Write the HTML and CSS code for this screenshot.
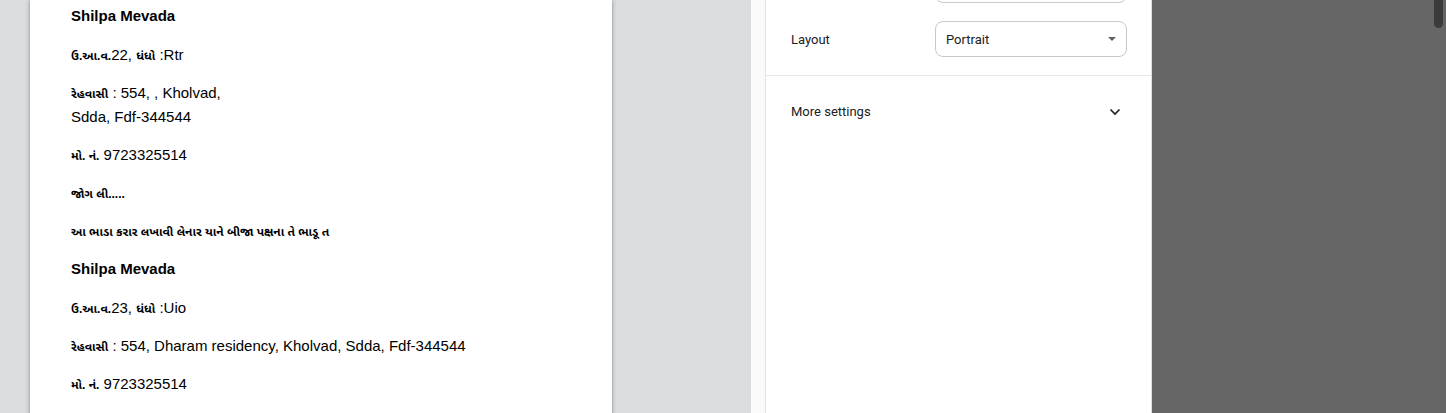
FILE: index.html
```html
<!DOCTYPE html>
<html>
<head>
<meta charset="utf-8">
<link rel="stylesheet" href="styles.css">
</head>
<body>
<div class="app">
  <div class="preview">
    <div class="page">
      <p class="name">Shilpa Mevada</p>
      <p><span class="gu">ઉ.આ.વ.</span>22, <span class="gu">ધંધો</span> :Rtr</p>
      <p><span class="gu">રેહવાસી</span> : 554, , Kholvad,<br>Sdda, Fdf-344544</p>
      <p><span class="gu">મો. નં.</span> 9723325514</p>
      <p><span class="gu">જોગ લી.....</span></p>
      <p><span class="gu">આ ભાડા કરાર લખાવી લેનાર યાને બીજા પક્ષના તે ભાડૂ ત</span></p>
      <p class="name">Shilpa Mevada</p>
      <p><span class="gu">ઉ.આ.વ.</span>23, <span class="gu">ધંધો</span> :Uio</p>
      <p><span class="gu">રેહવાસી</span> : 554, Dharam residency, Kholvad, Sdda, Fdf-344544</p>
      <p><span class="gu">મો. નં.</span> 9723325514</p>
    </div>
  </div>
  <div class="sidebar">
    <div class="strip"></div>
    <div class="settings">
      <div class="row row-top">
        <div class="select select-cut"></div>
      </div>
      <div class="row">
        <span class="label">Layout</span>
        <div class="select">
          <span>Portrait</span>
          <span class="caret"></span>
        </div>
      </div>
      <div class="more">
        <span class="label">More settings</span>
        <svg class="chev" width="12" height="8" viewBox="0 0 12 8"><path d="M1.5 1.5 L6 6 L10.5 1.5" fill="none" stroke="#202124" stroke-width="1.7"/></svg>
      </div>
    </div>
  </div>
  <div class="dark">
    <div class="thumb"></div>
  </div>
</div>
</body>
</html>
```

FILE: styles.css
```css
html, body {
  margin: 0;
  padding: 0;
  height: 100%;
  overflow: hidden;
}
.app {
  display: flex;
  height: 413px;
  width: 1446px;
}
.preview {
  width: 751px;
  flex: none;
  background: #dadce0;
  overflow: hidden;
}
.page {
  margin-left: 30px;
  width: 541px;
  height: 413px;
  background: #fff;
  box-shadow: 0 0 4px rgba(0, 0, 0, 0.4);
  padding: 4px 0 0 41px;
  font-family: "Liberation Sans", Arial, sans-serif;
  font-size: 15px;
  color: #000;
}
.page p {
  margin: 0 0 14px 0;
  line-height: 24px;
}
.page .name {
  font-weight: bold;
  margin-bottom: 15px;
}
.gu {
  font-size: 12px;
  line-height: 12px;
  font-weight: bold;
  font-family: "Liberation Sans", "Noto Sans Gujarati", "Noto Sans", sans-serif;
}
.sidebar {
  width: 401px;
  flex: none;
  display: flex;
}
.strip {
  width: 15px;
  background: #fafafa;
  border-right: 1px solid #e4e4e4;
}
.settings {
  flex: 1;
  background: #fff;
  border-right: 1px solid #e0e0e0;
  font-family: Roboto, "Liberation Sans", sans-serif;
  font-size: 13px;
  color: #202124;
}
.row {
  display: flex;
  align-items: center;
  padding: 0 24px 0 25px;
  height: 40px;
}
.row-top {
  overflow: hidden;
  margin-top: -25px;
  height: 44px;
  align-items: flex-end;
  justify-content: flex-end;
}
.label {
  width: 144px;
}
.select {
  box-sizing: border-box;
  width: 192px;
  height: 36px;
  border: 1px solid #c8c8c8;
  border-radius: 8px;
  display: flex;
  align-items: center;
  justify-content: space-between;
  padding: 0 10px 0 10px;
}
.select-cut {
  height: 26px;
  margin-bottom: 16px;
}
.caret {
  width: 0;
  height: 0;
  border-left: 4px solid transparent;
  border-right: 4px solid transparent;
  border-top: 4px solid #5f6368;
}
.more {
  border-top: 1px solid #e8e8e8;
  margin-top: 16px;
  height: 71px;
  display: flex;
  align-items: center;
  justify-content: space-between;
  padding: 0 30px 0 25px;
}
.dark {
  flex: 1;
  background: #666;
  position: relative;
}
.thumb {
  position: absolute;
  right: 3px;
  top: -10px;
  width: 9px;
  height: 38px;
  border-radius: 5px;
  background: #3b3b3b;
}
```
